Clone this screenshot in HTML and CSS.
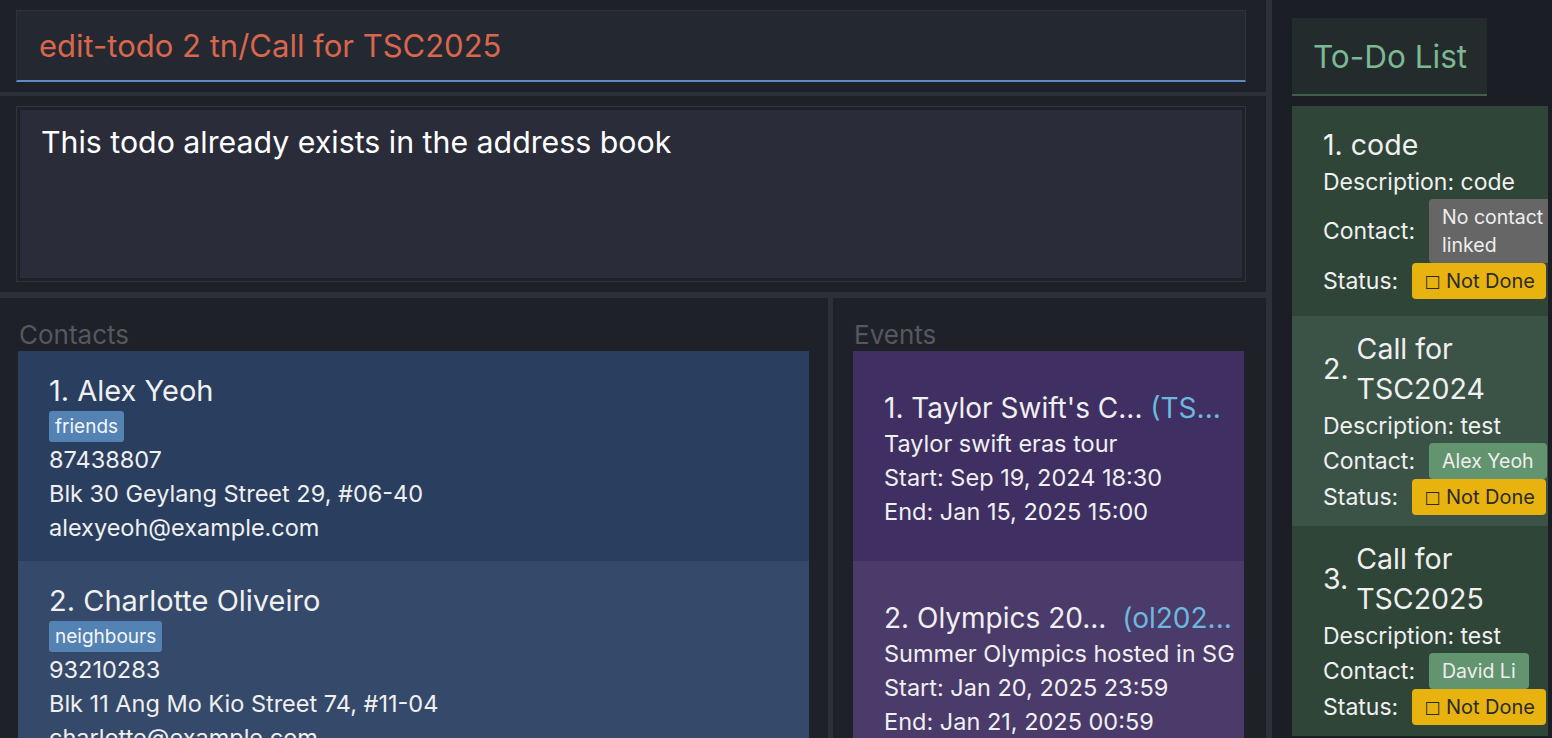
FILE: index.html
```html
<!DOCTYPE html>
<html lang="en">
<head>
<meta charset="utf-8">
<title>Address Book</title>
<link rel="stylesheet" href="styles.css">
</head>
<body>
<div class="app">
  <div class="main">
    <div class="cmd-pane">
      <div class="cmd-box">edit-todo 2 tn/Call for TSC2025</div>
    </div>
    <div class="result-pane">
      <div class="result-outer">
        <div class="result-box">This todo already exists in the address book</div>
      </div>
    </div>
    <div class="lists">
      <section class="list-pane contacts-pane">
        <div class="pane-label">Contacts</div>
        <div class="cards">
          <div class="card contact-card odd">
            <div class="name">1. Alex Yeoh</div>
            <div class="tags"><span class="tag">friends</span></div>
            <div class="line">87438807</div>
            <div class="line">Blk 30 Geylang Street 29, #06-40</div>
            <div class="line">alexyeoh@example.com</div>
          </div>
          <div class="card contact-card even">
            <div class="name">2. Charlotte Oliveiro</div>
            <div class="tags"><span class="tag">neighbours</span></div>
            <div class="line">93210283</div>
            <div class="line">Blk 11 Ang Mo Kio Street 74, #11-04</div>
            <div class="line">charlotte@example.com</div>
          </div>
        </div>
      </section>
      <div class="vdivider"></div>
      <section class="list-pane events-pane">
        <div class="pane-label">Events</div>
        <div class="cards">
          <div class="card event-card odd">
            <div class="name event-name">1. Taylor Swift's C... <span class="event-id">(TS...</span></div>
            <div class="line">Taylor swift eras tour</div>
            <div class="line">Start: Sep 19, 2024 18:30</div>
            <div class="line">End: Jan 15, 2025 15:00</div>
          </div>
          <div class="card event-card even">
            <div class="name event-name">2. Olympics 20... <span class="event-id wide">(ol202...</span></div>
            <div class="line">Summer Olympics hosted in SG</div>
            <div class="line">Start: Jan 20, 2025 23:59</div>
            <div class="line">End: Jan 21, 2025 00:59</div>
          </div>
        </div>
      </section>
    </div>
  </div>
  <div class="side-divider"></div>
  <aside class="todo-pane">
    <div class="todo-header">To-Do List</div>
    <div class="todo-list">
      <div class="todo-card odd">
        <div class="todo-title"><span class="todo-num">1.</span><span class="todo-name">code</span></div>
        <div class="todo-desc">Description: code</div>
        <div class="todo-row"><span class="todo-key">Contact:</span><span class="badge badge-none">No contact linked</span></div>
        <div class="todo-row"><span class="todo-key">Status:</span><span class="badge badge-status"><span class="box-glyph">□</span> Not Done</span></div>
      </div>
      <div class="todo-card even">
        <div class="todo-title"><span class="todo-num">2.</span><span class="todo-name">Call for TSC2024</span></div>
        <div class="todo-desc">Description: test</div>
        <div class="todo-row"><span class="todo-key">Contact:</span><span class="badge badge-contact">Alex Yeoh</span></div>
        <div class="todo-row"><span class="todo-key">Status:</span><span class="badge badge-status"><span class="box-glyph">□</span> Not Done</span></div>
      </div>
      <div class="todo-card odd">
        <div class="todo-title"><span class="todo-num">3.</span><span class="todo-name">Call for TSC2025</span></div>
        <div class="todo-desc">Description: test</div>
        <div class="todo-row"><span class="todo-key">Contact:</span><span class="badge badge-contact">David Li</span></div>
        <div class="todo-row"><span class="todo-key">Status:</span><span class="badge badge-status"><span class="box-glyph">□</span> Not Done</span></div>
      </div>
    </div>
  </aside>
</div>
</body>
</html>
```

FILE: styles.css
```css
* { box-sizing: border-box; }
html, body {
  margin: 0;
  padding: 0;
  height: 100%;
  overflow: hidden;
}
body {
  background: #1f2129;
  font-family: Inter, "Liberation Sans", sans-serif;
  color: #f0f0f0;
}
.app {
  display: flex;
  width: 1552px;
  height: 738px;
  overflow: hidden;
}
.main {
  width: 1266px;
  display: flex;
  flex-direction: column;
  flex-shrink: 0;
}
.cmd-pane {
  height: 96px;
  padding: 10px 20px 0 16px;
  border-bottom: 4px solid #2c3038;
}
.cmd-box {
  height: 72px;
  background: #242831;
  border: 1px solid #2d313a;
  border-bottom: 2px solid #5e8bc1;
  padding-left: 22px;
  display: flex;
  align-items: center;
  font-size: 31px;
  color: #d9664d;
}
.result-pane {
  height: 202px;
  padding: 10px 20px 0 16px;
  border-bottom: 6px solid #2c3038;
}
.result-outer {
  height: 176px;
  border: 1px solid #30343d;
  padding: 2px;
  background: #1f2229;
}
.result-box {
  height: 100%;
  background: #2a2d39;
  border: 1px solid #1c1f26;
  padding: 10px 21px;
  font-size: 30.3px;
  line-height: 44px;
  color: #ffffff;
}
.lists {
  flex: 1;
  display: flex;
  min-height: 0;
}
.list-pane {
  display: flex;
  flex-direction: column;
  min-height: 0;
  overflow: hidden;
}
.contacts-pane {
  width: 828px;
  padding: 0 19px 0 18px;
}
.events-pane {
  width: 433px;
  padding: 0 22px 0 20px;
}
.vdivider {
  width: 5px;
  background: #2c3038;
}
.pane-label {
  height: 54px;
  padding-top: 21px;
  padding-left: 1px;
  font-size: 26px;
  line-height: 32px;
  color: #55585d;
}
.card {
  height: 210px;
  flex-shrink: 0;
  display: flex;
  flex-direction: column;
  justify-content: center;
  padding-left: 31px;
  padding-top: 5px;
  white-space: nowrap;
}
.contact-card.odd { background: #2a3e5f; }
.contact-card.even { background: #354a6a; }
.event-card.odd { background: #3f2f62; }
.event-card.even { background: #4b3b6b; }
.name {
  font-size: 29px;
  line-height: 38px;
}
.event-name {
  font-size: 28px;
}
.tags {
  margin: 1px 0;
  display: flex;
}
.tag {
  background: #5483b3;
  border-radius: 3px;
  padding: 4px 6px;
  font-size: 19px;
  line-height: 23px;
  color: #f4f6f8;
}
.line {
  font-size: 23.5px;
  line-height: 34px;
}
.event-id {
  color: #6cb9dd;
  margin-left: 0;
}
.event-id.wide { margin-left: 8px; }
.side-divider {
  width: 6px;
  background: #2c3038;
  flex-shrink: 0;
}
.todo-pane {
  flex: 1;
  background: #1b1e25;
  padding: 18px 4px 0 20px;
  overflow: hidden;
}
.todo-header {
  width: 195px;
  height: 78px;
  background: #232b2c;
  border-bottom: 2px solid #40604c;
  padding-left: 21px;
  display: flex;
  align-items: center;
  font-size: 31.5px;
  color: #7db894;
}
.todo-list {
  margin-top: 10px;
  display: flex;
  flex-direction: column;
}
.todo-card {
  height: 210px;
  display: flex;
  flex-direction: column;
  justify-content: center;
  padding-left: 31px;
  padding-top: 2px;
  overflow: hidden;
}
.todo-card.odd { background: #2f4538; }
.todo-card.even { background: #3b5347; }
.todo-title {
  display: flex;
  align-items: center;
  font-size: 28.5px;
  line-height: 40px;
}
.todo-num { flex-shrink: 0; margin-right: 8px; }
.todo-desc {
  font-size: 23px;
  line-height: 34px;
}
.todo-row {
  display: flex;
  align-items: center;
  font-size: 23px;
}
.todo-key {
  margin-right: 14px;
  flex-shrink: 0;
}
.badge {
  flex-shrink: 0;
  border-radius: 4px;
  padding: 4px 13px;
  font-size: 19.5px;
  line-height: 28px;
}
.badge-none {
  background: #666666;
  max-width: 130px;
  color: #eeeeee;
}
.badge-contact {
  background: #62946f;
  color: #eeeeee;
}
.badge-status {
  background: #e8b30f;
  color: #2b2b2b;
  padding: 4px 11px 4px 12px;
  font-size: 20px;
}
.box-glyph {
  font-family: "DejaVu Sans", sans-serif;
  font-size: 17px;
  vertical-align: 1px;
}
```
